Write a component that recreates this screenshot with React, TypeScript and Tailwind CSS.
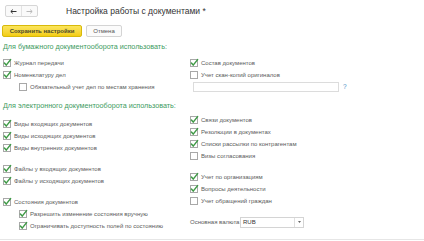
import React from "react";

function Box({ checked }: { checked: boolean }) {
  return (
    <svg width="8" height="8" viewBox="0 0 8 8" className="shrink-0 overflow-visible">
      <rect x="0.5" y="0.5" width="7" height="7" fill="#fff" stroke="#a8a8a8" strokeWidth="1" />
      {checked && (
        <path d="M1.4 4.1 L3.2 6.1 L7.6 0.6" fill="none" stroke="#3f9a46" strokeWidth="1.5" strokeLinecap="round" strokeLinejoin="round" />
      )}
    </svg>
  );
}

function Row({ checked, label, indent }: { checked: boolean; label: string; indent?: boolean }) {
  return (
    <div className={"flex h-[12px] items-center " + (indent ? "pl-[16px]" : "")}>
      <Box checked={checked} />
      <span className="ml-[3px] whitespace-nowrap text-[6px] leading-none text-[#5a5a5a]">{label}</span>
    </div>
  );
}

export default function App() {
  return (
    <div
      className="relative flex h-[241px] w-[424px] flex-col overflow-hidden bg-white"
      style={{ fontFamily: '"Liberation Sans", Arial, sans-serif' }}
    >
      {/* header */}
      <div className="flex h-[12px] items-center pl-[5px] mt-[5px]">
        <div className="flex h-[12px] w-[33px] rounded-[2px] border border-[#d6d6d6] bg-[#fafafa]">
          <div className="flex flex-1 items-center justify-center border-r border-[#e2e2e2]">
            <svg width="7" height="5" viewBox="0 0 7 5">
              <path d="M6.5 2.5 H1 M2.8 0.6 L0.8 2.5 L2.8 4.4" fill="none" stroke="#333" strokeWidth="1" />
            </svg>
          </div>
          <div className="flex flex-1 items-center justify-center">
            <svg width="7" height="5" viewBox="0 0 7 5">
              <path d="M0.5 2.5 H6 M4.2 0.6 L6.2 2.5 L4.2 4.4" fill="none" stroke="#b8b8b8" strokeWidth="1" />
            </svg>
          </div>
        </div>
        <span className="ml-[28px] whitespace-nowrap text-[8.5px] leading-none text-[#333]">
          Настройка работы с документами *
        </span>
      </div>

      {/* buttons */}
      <div className="mt-[8px] flex h-[12px] items-stretch pl-[2px]">
        <div className="flex w-[80px] items-center justify-center rounded-[2px] border border-[#d8b90a] bg-gradient-to-b from-[#fbe55a] to-[#f3cd0c]">
          <span className="whitespace-nowrap text-[6px] font-bold leading-none text-[#4a4a2a]">Сохранить настройки</span>
        </div>
        <div className="ml-[4px] flex w-[36px] items-center justify-center rounded-[2px] border border-[#d4d4d4] bg-[#fbfbfb]">
          <span className="whitespace-nowrap text-[6px] leading-none text-[#555]">Отмена</span>
        </div>
      </div>

      {/* section 1 */}
      <div className="mt-[5px] flex h-[10px] items-center pl-[3px]">
        <span className="whitespace-nowrap text-[7.2px] leading-none text-[#3e9b5f]">
          Для бумажного документооборота использовать:
        </span>
      </div>
      <div className="mt-[5px] grid grid-cols-[187px_1fr] pl-[3px]">
        <div className="flex flex-col">
          <Row checked label="Журнал передачи" />
          <Row checked label="Номенклатуру дел" />
          <Row checked={false} indent label="Обязательный учет дел по местам хранения" />
        </div>
        <div className="flex flex-col">
          <Row checked label="Состав документов" />
          <Row checked={false} label="Учет скан-копий оригиналов" />
          <div className="flex h-[12px] items-center pl-[3px]">
            <div className="h-[10px] w-[146px] border border-[#dcdcdc] bg-white" />
            <span className="ml-[4px] text-[6.5px] leading-none text-[#4a8fc4]">?</span>
          </div>
        </div>
      </div>

      {/* section 2 */}
      <div className="mt-[8px] flex h-[10px] items-center pl-[3px]">
        <span className="whitespace-nowrap text-[7.2px] leading-none text-[#3e9b5f]">
          Для электронного документооборота использовать:
        </span>
      </div>
      <div className="grid grid-cols-[187px_1fr] items-start pl-[3px]">
        <div className="mt-[7px] flex flex-col">
          <Row checked label="Виды входящих документов" />
          <Row checked label="Виды исходящих документов" />
          <Row checked label="Виды внутренних документов" />
          <div className="h-[9px]" />
          <Row checked label="Файлы у входящих документов" />
          <Row checked label="Файлы у исходящих документов" />
          <div className="h-[9px]" />
          <Row checked label="Состояния документов" />
          <Row checked indent label="Разрешить изменение состояния вручную" />
          <Row checked indent label="Ограничивать доступность полей по состоянию" />
        </div>
        <div className="mt-[3px] flex flex-col">
          <Row checked label="Связи документов" />
          <Row checked label="Резолюции в документах" />
          <Row checked label="Списки рассылки по контрагентам" />
          <Row checked={false} label="Визы согласования" />
          <div className="h-[9px]" />
          <Row checked label="Учет по организациям" />
          <Row checked label="Вопросы деятельности" />
          <Row checked={false} label="Учет обращений граждан" />
          <div className="h-[9px]" />
          <div className="flex h-[12px] items-center">
            <span className="w-[50px] whitespace-nowrap text-[6px] leading-none text-[#5a5a5a]">Основная валюта:</span>
            <div className="flex h-[11px] w-[64px] items-stretch border border-[#d4d4d4] bg-white">
              <div className="flex flex-1 items-center pl-[2px]">
                <span className="text-[6px] leading-none text-[#333]">RUB</span>
              </div>
              <div className="flex w-[9px] items-center justify-center border-l border-[#e0e0e0]">
                <svg width="3" height="2" viewBox="0 0 3 2">
                  <path d="M0 0 H3 L1.5 2 Z" fill="#666" />
                </svg>
              </div>
            </div>
          </div>
        </div>
      </div>

      {/* bottom table edge */}
      <div className="absolute bottom-0 left-0 right-0 h-[2px] border-t border-[#e6e6e6]" />
    </div>
  );
}
